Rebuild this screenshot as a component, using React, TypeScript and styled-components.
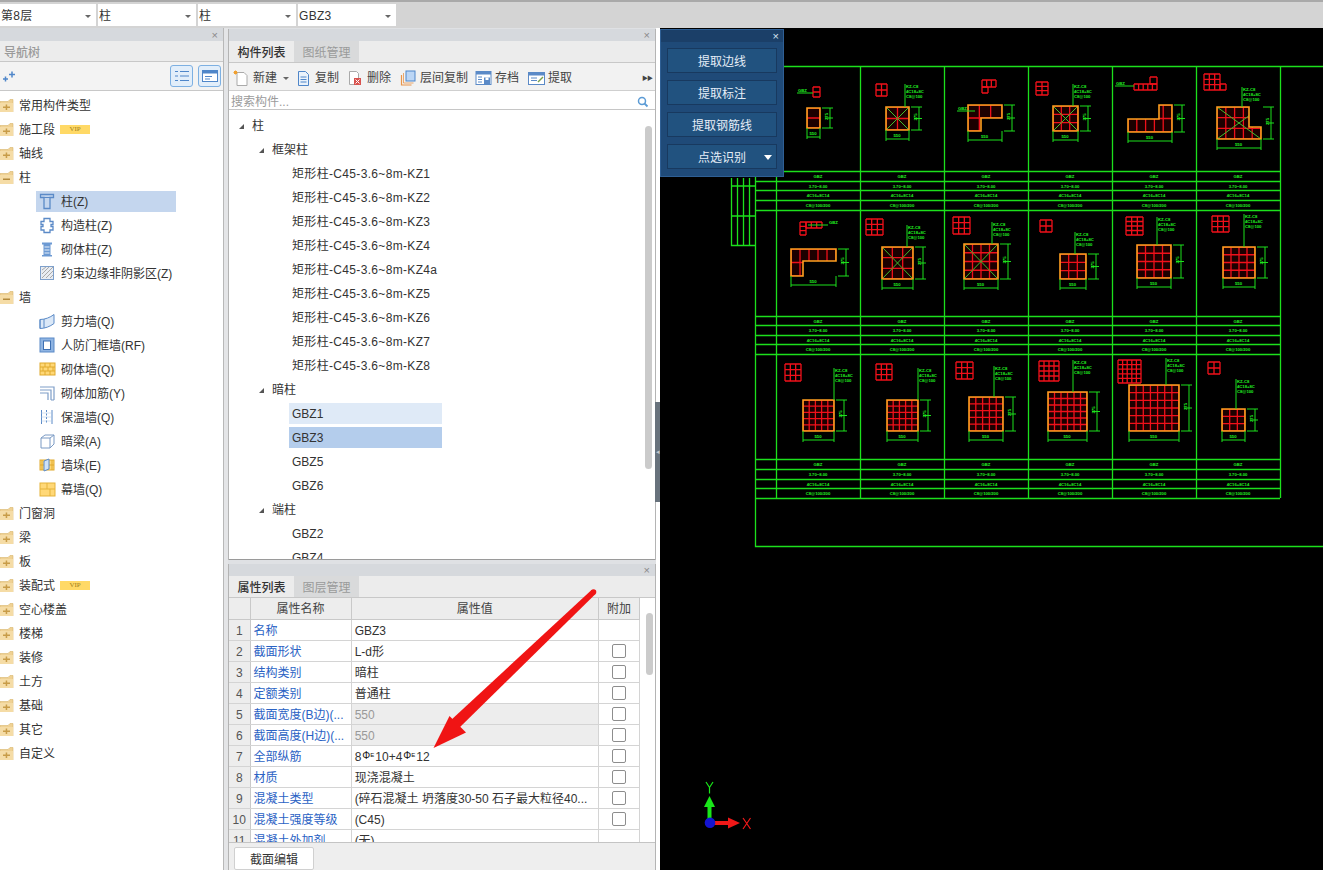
import React from "react";
import styled, { createGlobalStyle } from "styled-components";

const Global = createGlobalStyle`
  html, body { margin: 0; padding: 0; background: #000; }
  * { box-sizing: border-box; }
  #root { width: 1323px; height: 870px; overflow: hidden; }
`;

const LATIN = `"Liberation Sans", "Noto Sans CJK SC", sans-serif`;

const Page = styled.div`
  position: relative;
  width: 1323px;
  height: 870px;
  overflow: hidden;
  display: flex;
  flex-direction: column;
  background: #dfe1e4;
  font-family: ${LATIN};
  font-size: 12px;
  line-height: 16px;
  color: #333;
`;

/* top selects */
const TopBar = styled.div`
  height: 28px;
  flex: none;
  display: flex;
  gap: 2px;
  padding: 4px 0 2px 0;
  background: #d4d4d4;
  border-top: 2px solid #a9a9a9;
  align-items: stretch;
`;
const SelectBox = styled.div<{ $w: number }>`
  width: ${(p) => p.$w}px;
  background: #fff;
  display: flex;
  align-items: center;
  padding: 2px 5px 0 1px;
  font-size: 12px;
  color: #333;
  letter-spacing: 0.3px;
  justify-content: space-between;
  margin-top: -2px;
`;
const Caret = styled.span<{ $ml?: number }>`
  width: 0;
  height: 0;
  margin-left: ${(p) => p.$ml || 0}px;
  border-left: 3px solid transparent;
  border-right: 3px solid transparent;
  border-top: 3px solid #666;
`;

const Main = styled.div`
  flex: 1;
  display: flex;
  min-height: 0;
`;

/* left nav */
const Nav = styled.div`
  width: 224px;
  flex: none;
  display: flex;
  flex-direction: column;
  background: #fff;
  border-right: 1px solid #b8b8b8;
`;
const CloseStrip = styled.div<{ $h: number }>`
  height: ${(p) => p.$h}px;
  flex: none;
  background: #d6d9dd;
  display: flex;
  align-items: center;
  justify-content: flex-end;
  padding-right: 5px;
  color: #8a8a8a;
  font-size: 11px;
  line-height: 12px;
`;
const NavTitle = styled.div`
  height: 21px;
  flex: none;
  background: #ececec;
  border-bottom: 1px solid #c8c8c8;
  color: #9a9a9a;
  font-size: 12px;
  font-weight: 500;
  padding: 3px 0 0 4px;
  display: flex;
  align-items: center;
`;
const NavTools = styled.div`
  height: 29px;
  flex: none;
  background: #f3f3f3;
  border-bottom: 1px solid #c8c8c8;
  display: flex;
  align-items: center;
  padding: 0 2px 0 2px;
  gap: 5px;
`;
const Spacer = styled.div`
  flex: 1;
`;
const ToolToggle = styled.div`
  width: 23px;
  height: 22px;
  border: 1px solid #7db0e2;
  border-radius: 3px;
  background: #e2eefa;
  display: flex;
  align-items: center;
  justify-content: center;
`;
const NavTree = styled.div`
  flex: 1;
  padding-top: 2px;
  display: flex;
  flex-direction: column;
`;
const NavRow = styled.div<{ $child?: boolean }>`
  height: 24px;
  flex: none;
  display: flex;
  align-items: center;
  padding-left: ${(p) => (p.$child ? 36 : 0)}px;
  color: #333;
  font-size: 12px;
  white-space: nowrap;
`;
const FolderLabel = styled.span`
  margin-left: 5px;
  padding-top: 2px;
`;
const ChildLabel = styled.span`
  padding-top: 2px;
`;
const Vip = styled.span`
  margin-left: 5px;
  width: 30px;
  height: 9px;
  background: #ffd966;
  color: #a08020;
  font: 7px/9px "Liberation Serif", serif;
  text-align: center;
`;
const ChildInner = styled.div<{ $sel?: boolean }>`
  height: 21px;
  width: ${(p) => (p.$sel ? "140px" : "auto")};
  display: flex;
  align-items: center;
  gap: 6px;
  padding-left: 3px;
  background: ${(p) => (p.$sel ? "#c4d6ee" : "transparent")};
`;
const IconSlot = styled.span`
  width: 16px;
  height: 16px;
  flex: none;
  display: block;
`;

/* centre column */
const Gutter = styled.div`
  width: 4px;
  flex: none;
  background: #e4e5e7;
`;
const Column = styled.div`
  width: 428px;
  flex: none;
  display: flex;
  flex-direction: column;
  gap: 4px;
  padding-top: 1px;
`;
const Panel = styled.div<{ $h: number }>`
  height: ${(p) => p.$h}px;
  flex: none;
  display: flex;
  flex-direction: column;
  background: #fff;
  overflow: hidden;
  border-left: 1px solid #b4b4b4;
  border-right: 1px solid #b4b4b4;
`;
const Tabs = styled.div`
  height: 22px;
  flex: none;
  display: flex;
  background: #ececec;
  border-bottom: 1px solid #c8c8c8;
`;
const Tab = styled.div<{ $on?: boolean }>`
  width: 65px;
  display: flex;
  align-items: center;
  justify-content: center;
  padding-top: 2px;
  font-size: 12px;
  font-weight: ${(p) => (p.$on ? 500 : 400)};
  color: ${(p) => (p.$on ? "#333" : "#9a9a9a")};
  background: ${(p) => (p.$on ? "#ececec" : "#d9dadb")};
`;
const Toolbar = styled.div`
  height: 28px;
  flex: none;
  background: #f2f2f2;
  border-bottom: 1px solid #cfcfcf;
  display: flex;
  align-items: center;
  padding: 3px 0 0 4px;
  font-size: 12px;
  color: #444;
`;
const ToolItem = styled.div<{ $gap: number }>`
  display: flex;
  align-items: center;
  gap: 3px;
  margin-right: ${(p) => p.$gap}px;
  white-space: nowrap;
`;
const MoreArrows = styled.span`
  margin-left: auto;
  margin-right: 3px;
  font-size: 6px;
  color: #444;
  letter-spacing: -1px;
`;
const Search = styled.div`
  height: 19px;
  flex: none;
  background: #fff;
  border-bottom: 1px solid #c6c6c6;
  display: flex;
  align-items: center;
  justify-content: space-between;
  padding: 3px 6px 0 2px;
  color: #9b9b9b;
  font-size: 12px;
`;
const TreeArea = styled.div`
  position: relative;
  flex: 1;
  overflow: hidden;
  padding-top: 3px;
  border-bottom: 1px solid #9a9a9a;
`;
const TreeRow = styled.div<{ $lvl: number; $wide?: boolean }>`
  height: 24px;
  display: flex;
  align-items: center;
  padding: 2px 0 0 ${(p) => p.$lvl}px;
  font-size: 12px;
  color: #333;
  white-space: nowrap;
  letter-spacing: ${(p) => (p.$wide ? "0.33px" : "0")};
`;
const TreeTri = styled.span`
  width: 0;
  height: 0;
  margin-right: 8px;
  border-left: 5px solid transparent;
  border-bottom: 5px solid #555;
`;
const TreePill = styled.span<{ $bg?: string }>`
  width: 153px;
  height: 21px;
  margin: -2px 0 0 -3px;
  padding: 2px 0 0 3px;
  display: flex;
  align-items: center;
  background: ${(p) => p.$bg || "transparent"};
`;
const Scroll = styled.div<{ $top: number; $h: number; $r: number }>`
  position: absolute;
  right: ${(p) => p.$r}px;
  top: ${(p) => p.$top}px;
  width: 7px;
  height: ${(p) => p.$h}px;
  border-radius: 4px;
  background: #cbcbcb;
`;

/* property table */
const TableWrap = styled.div`
  position: relative;
  flex: 1;
  overflow: hidden;
  min-height: 0;
`;
const Grid = styled.table`
  border-collapse: collapse;
  table-layout: fixed;
  width: 411px;
  font-size: 12px;
`;
const HeadCell = styled.th`
  height: 21px;
  padding: 2px 0 0;
  font-weight: 400;
  background: #ededed;
  color: #444;
  border-right: 1px solid #c9c9c9;
  border-bottom: 1px solid #c9c9c9;
`;
const NumCell = styled.td`
  height: 21px;
  padding: 2px 0 0;
  text-align: center;
  background: #ededed;
  color: #555;
  border-right: 1px solid #c9c9c9;
  border-bottom: 1px solid #d4d4d4;
`;
const NameCell = styled.td`
  height: 21px;
  padding: 2px 0 0 3px;
  color: #2a62c4;
  white-space: nowrap;
  overflow: hidden;
  border-right: 1px solid #d4d4d4;
  border-bottom: 1px solid #d4d4d4;
`;
const ValCell = styled.td<{ $grey?: boolean }>`
  height: 21px;
  padding: 2px 0 0 3px;
  white-space: nowrap;
  overflow: hidden;
  color: ${(p) => (p.$grey ? "#999" : "#333")};
  background: ${(p) => (p.$grey ? "#ededed" : "#fff")};
  border-right: 1px solid #d4d4d4;
  border-bottom: 1px solid #d4d4d4;
`;
const CheckCell = styled.td`
  height: 21px;
  padding: 0;
  border-bottom: 1px solid #d4d4d4;
  border-right: 1px solid #d4d4d4;
  text-align: center;
`;
const Check = styled.span`
  display: block;
  width: 14px;
  height: 14px;
  margin: 0 auto;
  border: 1px solid #8d8d8d;
  border-radius: 2px;
  background: #fff;
`;
const Rebar = styled.span`
  display: inline-block;
  padding: 0 1px;
  font-size: 10px;
  line-height: 0;
  vertical-align: 2px;
  color: #111;
`;
const RebarE = styled.span`
  font-size: 6px;
  vertical-align: 2px;
`;
const Footer = styled.div`
  height: 28px;
  flex: none;
  background: #eeeeee;
  border-top: 1px solid #c4c4c4;
  padding: 4px 0 0 5px;
`;
const FootBtn = styled.div`
  width: 80px;
  height: 23px;
  background: #fff;
  border: 1px solid #d0d0d0;
  border-radius: 2px;
  padding-top: 2px;
  display: flex;
  align-items: center;
  justify-content: center;
  font-size: 12px;
`;

/* splitter + canvas */
const Split = styled.div`
  width: 4px;
  flex: none;
  background: #fff;
  display: flex;
  align-items: center;
  position: relative;
`;
const SplitHandle = styled.div`
  position: absolute;
  left: -1px;
  top: 374px;
  width: 5px;
  height: 100px;
  background: #68727c;
  display: flex;
  align-items: center;
  justify-content: center;
  color: #c4c8cc;
  font-size: 7px;
`;
const Canvas = styled.div`
  position: relative;
  flex: 1;
  background: #000;
  overflow: hidden;
`;
const CadSvg = styled.svg`
  display: block;
`;
const Float = styled.div`
  position: absolute;
  left: 0;
  top: 1px;
  width: 124px;
  height: 148px;
  background: #1f4a78;
  border: 1px solid #2f5f94;
  display: flex;
  flex-direction: column;
`;
const FloatHead = styled.div`
  height: 12px;
  flex: none;
  background: #1b3f68;
  color: #d6e3f0;
  font-size: 11px;
  line-height: 12px;
  text-align: right;
  padding-right: 4px;
`;
const FloatBody = styled.div`
  display: flex;
  flex-direction: column;
  gap: 7px;
  padding: 6px 6px 0 6px;
`;
const FloatBtn = styled.div`
  position: relative;
  height: 25px;
  background: #21527f;
  border: 1px solid #18395f;
  color: #e6eef7;
  font-size: 12px;
  padding-top: 2px;
  display: flex;
  align-items: center;
  justify-content: center;
`;
const FloatCaret = styled.span`
  position: absolute;
  right: 4px;
  top: 10px;
  border-left: 4px solid transparent;
  border-right: 4px solid transparent;
  border-top: 5px solid #fff;
`;
const ArrowOverlay = styled.svg`
  position: absolute;
  left: 0;
  top: 0;
  pointer-events: none;
`;

/* icons */
const Folder: React.FC<{ open?: boolean }> = ({ open }) => (
  <svg width="14" height="13" viewBox="0 0 14 13">
    <path d="M0 2.500h8l2 -2h3v12.500H0z" fill="#efd193" stroke="#d9b66c" strokeWidth="0.6" />
    <rect x="0" y="4" width="13" height="9" fill="#f5dca6" />
    <rect x="3" y="7.500" width="7" height="1.500" fill={open ? "#b38a3c" : "#c89c48"} />
    {!open && <rect x="5.700" y="5.500" width="1.500" height="5.500" fill="#c89c48" />}
  </svg>
);

const B = "#5b8ac7";
const childIcons: Record<string, React.ReactNode> = {
  col: (
    <>
      <path d="M1.500 1.500h13v3h-3.500v11h-6v-11h-3.500z" fill="none" stroke={B} strokeWidth="1.300" />
      <path d="M5 4.500h6" stroke={B} />
    </>
  ),
  gz: <path d="M5 1.500h6v3h3v3h-2v2h2v3.500h-3v2.500h-6v-2.500h-3v-3.500h2v-2h-2v-3h3z" fill="none" stroke={B} strokeWidth="1.300" />,
  qt: (
    <>
      <path d="M3 1.500h10v2h-1.500v10.500h1.500v1.500h-10v-1.500h1.500v-10.500h-1.500z" fill="#6d9ad3" />
      <path d="M5.500 6h5M5.500 9h5M5.500 12h5" stroke="#e8f0fa" />
    </>
  ),
  ys: (
    <>
      <rect x="1.500" y="1.500" width="13" height="13" fill="#e8ecf2" stroke="#7ea0cc" />
      <path d="M3 5l4-3M3 9l7-7M3 13l11-11M7 13l7-7M11 13l3-3" stroke="#a9a9a9" />
    </>
  ),
  jl: (
    <>
      <path d="M1 6.500c5 0 10-2 14-5v9c-4 3-9 5-14 5z" fill="#dbe8f7" stroke={B} />
      <path d="M1 6.500v9M5 6v9" stroke={B} />
    </>
  ),
  rf: (
    <>
      <rect x="1" y="1" width="14" height="14" fill="#8fb4e2" stroke={B} />
      <rect x="4.500" y="4" width="7" height="8.500" fill="#fff" stroke="#3e70b3" />
    </>
  ),
  qtq: (
    <>
      <rect x="1" y="2" width="15" height="12" fill="#ffd877" stroke="#e0aa2e" />
      <path d="M1 6h15M1 10h15M6 2v4M11 2v4M4 6v4M9 6v4M14 6v4M6 10v4M11 10v4" stroke="#e0aa2e" />
    </>
  ),
  jj: <path d="M1 2h14v13M1 5h11v10M1 8h8v7M15 2M12 15h3" fill="none" stroke="#7e9ec8" strokeWidth="1.200" />,
  bw: (
    <>
      <path d="M2.500 1v14M13 1v14" stroke={B} />
      <path d="M7.500 1v14" stroke={B} strokeDasharray="2 1.500" />
      <path d="M2.500 4h10M2.500 8h10M2.500 12h10" stroke="#a8c4e4" strokeDasharray="1 1" />
    </>
  ),
  al: (
    <>
      <path d="M2 5l4-3h9v9l-4 4H2z" fill="#fff" stroke="#7a9ac4" />
      <path d="M2 5h9v10M11 5l4-3" stroke="#7a9ac4" fill="none" />
    </>
  ),
  qd: (
    <>
      <rect x="1" y="3" width="14" height="10" fill="#ffd877" stroke="#e0aa2e" />
      <path d="M1 8h14M3 3v10M13 3v10" stroke="#e0aa2e" />
      <path d="M5 4l5-2v10l-5 2z" fill="#cfe2f6" stroke={B} />
    </>
  ),
  mq: (
    <>
      <rect x="1" y="2" width="15" height="13" fill="#ffd877" stroke="#e5b33a" />
      <path d="M1 8h15M8 2v6M11 8v7" stroke="#e5b33a" />
    </>
  ),
};
const ChildIcon: React.FC<{ k: string }> = ({ k }) => (
  <IconSlot>
    <svg width="17" height="17" viewBox="0 0 17 17">
      {childIcons[k]}
    </svg>
  </IconSlot>
);

type NavItem = { t: string; open?: boolean; vip?: boolean; c?: [string, string, boolean?][] };
const navData: NavItem[] = [
  { t: "常用构件类型" },
  { t: "施工段", vip: true },
  { t: "轴线" },
  {
    t: "柱",
    open: true,
    c: [
      ["col", "柱(Z)", true],
      ["gz", "构造柱(Z)"],
      ["qt", "砌体柱(Z)"],
      ["ys", "约束边缘非阴影区(Z)"],
    ],
  },
  {
    t: "墙",
    open: true,
    c: [
      ["jl", "剪力墙(Q)"],
      ["rf", "人防门框墙(RF)"],
      ["qtq", "砌体墙(Q)"],
      ["jj", "砌体加筋(Y)"],
      ["bw", "保温墙(Q)"],
      ["al", "暗梁(A)"],
      ["qd", "墙垛(E)"],
      ["mq", "幕墙(Q)"],
    ],
  },
  { t: "门窗洞" },
  { t: "梁" },
  { t: "板" },
  { t: "装配式", vip: true },
  { t: "空心楼盖" },
  { t: "楼梯" },
  { t: "装修" },
  { t: "土方" },
  { t: "基础" },
  { t: "其它" },
  { t: "自定义" },
];

const kz = ["KZ1", "KZ2", "KZ3", "KZ4", "KZ4a", "KZ5", "KZ6", "KZ7", "KZ8"];

const RebarMark: React.FC = () => (
  <Rebar>
    Φ<RebarE>E</RebarE>
  </Rebar>
);

const props: { n: string; name: string; val: React.ReactNode; grey?: boolean; noCheck?: boolean }[] = [
  { n: "1", name: "名称", val: "GBZ3", noCheck: true },
  { n: "2", name: "截面形状", val: "L-d形" },
  { n: "3", name: "结构类别", val: "暗柱" },
  { n: "4", name: "定额类别", val: "普通柱" },
  { n: "5", name: "截面宽度(B边)(...", val: "550", grey: true },
  { n: "6", name: "截面高度(H边)(...", val: "550", grey: true },
  {
    n: "7",
    name: "全部纵筋",
    val: (
      <>
        8
        <RebarMark />
        10+4
        <RebarMark />
        12
      </>
    ),
  },
  { n: "8", name: "材质", val: "现浇混凝土" },
  { n: "9", name: "混凝土类型", val: "(碎石混凝土 坍落度30-50 石子最大粒径40..." },
  { n: "10", name: "混凝土强度等级", val: "(C45)" },
  { n: "11", name: "混凝土外加剂", val: "(无)", noCheck: true },
];

/* CAD drawing: coordinates are the drawing's own, offset by the canvas origin */
const OX = 660;
const OY = 28;
const G = "#1ce01c";
const colsX = [776, 860, 944, 1028, 1112, 1196, 1280];
const rowY = [
  [171, 181, 190, 200, 210],
  [316, 325, 335, 344, 354],
  [459, 469, 479, 488, 498],
];

type R4 = [number, number, number, number];
type Sec = {
  p: string;
  x: number;
  y: number;
  w: number;
  h: number;
  nx: number;
  ny: number;
  cross?: boolean;
  thumb: R4[];
  tag: [number, number];
  side?: [number, number];
};
const rect = (x: number, y: number, w: number, h: number) => `M${x} ${y}h${w}v${h}h${-w}z`;
const secs: Sec[] = [
  { p: rect(807, 108, 13, 20), x: 807, y: 108, w: 13, h: 20, nx: 1, ny: 2, thumb: [[813, 87, 7, 10]], tag: [797, 93], side: [813, 93] },
  { p: rect(886, 107, 23, 23), x: 886, y: 107, w: 23, h: 23, nx: 2, ny: 2, cross: true, thumb: [[876, 84, 11, 12]], tag: [905, 92] },
  { p: "M968 105h34v13h-21v13h-13z", x: 968, y: 105, w: 34, h: 26, nx: 3, ny: 2, thumb: [[982, 80, 14, 7], [982, 87, 6, 6]], tag: [957, 110], side: [975, 111] },
  { p: rect(1053, 106, 25, 25), x: 1053, y: 106, w: 25, h: 25, nx: 3, ny: 3, cross: true, thumb: [[1036, 82, 12, 13]], tag: [1073, 92] },
  { p: "M1159 105h13v27h-44v-13h31z", x: 1128, y: 105, w: 44, h: 27, nx: 5, ny: 2, thumb: [[1134, 84, 23, 6], [1150, 77, 7, 7]], tag: [1115, 84], side: [1134, 86] },
  { p: "M1217 107h32v20h12v12h-44z", x: 1217, y: 107, w: 44, h: 32, nx: 5, ny: 3, cross: true, thumb: [[1204, 74, 16, 16], [1220, 84, 6, 6]], tag: [1242, 95] },
  { p: "M791 249h45v12h-33v15h-12z", x: 791, y: 249, w: 45, h: 27, nx: 5, ny: 2, thumb: [[800, 222, 6, 13], [806, 222, 16, 6]], tag: [828, 223], side: [808, 225] },
  { p: rect(882, 247, 31, 32), x: 882, y: 247, w: 31, h: 32, nx: 3, ny: 3, cross: true, thumb: [[866, 219, 17, 16]], tag: [907, 233] },
  { p: rect(964, 244, 34, 35), x: 964, y: 244, w: 34, h: 35, nx: 4, ny: 4, cross: true, thumb: [[953, 217, 17, 17]], tag: [992, 230] },
  { p: rect(1060, 254, 26, 25), x: 1060, y: 254, w: 26, h: 25, nx: 3, ny: 3, thumb: [[1040, 220, 12, 12]], tag: [1075, 240] },
  { p: rect(1137, 245, 34, 33), x: 1137, y: 245, w: 34, h: 33, nx: 4, ny: 4, thumb: [[1126, 217, 17, 18]], tag: [1157, 225] },
  { p: rect(1223, 247, 32, 31), x: 1223, y: 247, w: 32, h: 31, nx: 4, ny: 4, thumb: [[1212, 216, 17, 16]], tag: [1244, 222] },
  { p: rect(803, 400, 31, 31), x: 803, y: 400, w: 31, h: 31, nx: 5, ny: 5, thumb: [[785, 364, 16, 17]], tag: [834, 376] },
  { p: rect(887, 400, 31, 31), x: 887, y: 400, w: 31, h: 31, nx: 5, ny: 5, thumb: [[876, 364, 16, 16]], tag: [918, 376] },
  { p: rect(969, 397, 34, 34), x: 969, y: 397, w: 34, h: 34, nx: 5, ny: 5, thumb: [[956, 362, 17, 17]], tag: [994, 374] },
  { p: rect(1048, 392, 39, 39), x: 1048, y: 392, w: 39, h: 39, nx: 6, ny: 6, thumb: [[1039, 361, 20, 20]], tag: [1073, 368] },
  { p: rect(1129, 385, 50, 46), x: 1129, y: 385, w: 50, h: 46, nx: 7, ny: 6, thumb: [[1118, 360, 23, 23]], tag: [1166, 366] },
  { p: rect(1222, 409, 23, 22), x: 1222, y: 409, w: 23, h: 22, nx: 3, ny: 3, thumb: [[1208, 362, 12, 12]], tag: [1236, 387] },
];

const CadLabel = styled.text`
  fill: #22f022;
  font-family: "Liberation Sans", sans-serif;
  font-size: 4.2px;
  font-weight: 700;
`;

const gridPath = (x: number, y: number, w: number, h: number, nx: number, ny: number) => {
  let d = "";
  for (let i = 0; i <= nx; i++) d += `M${x + (w * i) / nx} ${y}v${h}`;
  for (let j = 0; j <= ny; j++) d += `M${x} ${y + (h * j) / ny}h${w}`;
  return d;
};

const Section: React.FC<{ s: Sec; clipId: string }> = ({ s, clipId }) => {
  const bx = s.x + s.w;
  const by = s.y + s.h;
  return (
    <g>
      {s.thumb.map(([tx, ty, tw, th], i) => (
        <path
          key={i}
          d={gridPath(tx, ty, tw, th, Math.max(1, Math.round(tw / 5)), Math.max(1, Math.round(th / 5)))}
          stroke="#f0101a"
          fill="none"
          strokeWidth="1.300"
        />
      ))}
      <clipPath id={clipId}>
        <path d={s.p} />
      </clipPath>
      <path d={s.p} fill="#1c0000" />
      <path d={gridPath(s.x, s.y, s.w, s.h, s.nx, s.ny)} clipPath={`url(#${clipId})`} stroke="#f0101a" fill="none" strokeWidth="1.300" />
      {s.cross && (
        <path d={`M${s.x} ${s.y}L${bx} ${by}M${bx} ${s.y}L${s.x} ${by}`} clipPath={`url(#${clipId})`} stroke="#3fbf2f" strokeWidth="1" />
      )}
      <path d={s.p} fill="none" stroke="#ffa020" strokeWidth="1.600" />
      <path
        d={`M${s.x} ${by}v11M${bx} ${by}v11M${s.x} ${by + 9}h${s.w}M${bx + 2} ${s.y}h11M${bx + 2} ${by}h11M${bx + 10} ${s.y}v${s.h}M${bx + 5} ${s.y + s.h / 2}h8`}
        stroke={G}
        strokeWidth="1"
        fill="none"
      />
      {s.side ? (
        <>
          <path d={`M${s.tag[0]} ${s.side[1]}H${s.side[0]}`} stroke={G} strokeWidth="1" />
          <CadLabel x={s.tag[0] + 1} y={s.side[1] - 1}>GBZ</CadLabel>
        </>
      ) : (
        <>
          <path d={`M${s.tag[0]} ${s.tag[1] - 8}V${s.y}`} stroke={G} strokeWidth="1" />
          <CadLabel x={s.tag[0] + 1} y={s.tag[1] - 4}>KZ-C8</CadLabel>
          <CadLabel x={s.tag[0] + 1} y={s.tag[1] + 1}>4C18+8C</CadLabel>
          <CadLabel x={s.tag[0] + 1} y={s.tag[1] + 6}>C8@100</CadLabel>
        </>
      )}
      <CadLabel x={s.x + s.w / 2 - 4} y={by + 7}>550</CadLabel>
      <CadLabel x={bx + 8} y={s.y + s.h / 2 + 2} transform={`rotate(-90 ${bx + 8} ${s.y + s.h / 2 + 2})`}>
        275
      </CadLabel>
    </g>
  );
};

const CadDrawing: React.FC = () => (
  <CadSvg width={663} height={842} viewBox={`${OX} ${OY} 663 842`}>
    <g stroke={G} strokeWidth="1.300" fill="none" shapeRendering="auto">
      <path d="M755 66.500H1323M755.500 66V546.500H1323" />
      {colsX.map((x) => (
        <path key={x} d={`M${x + 0.5} 66V498`} />
      ))}
      {rowY.flat().map((y) => (
        <path key={y} d={`M755 ${y + 0.5}H1280`} />
      ))}
      <path d="M731.500 178V245.500H755M737.500 178V245M743.500 178V245M749.500 178V245M731 186H755M731 216H755" />
    </g>
    {rowY.map((ys, r) =>
      colsX.slice(0, 6).map((x) => (
        <g key={`${r}-${x}`} textAnchor="middle">
          <CadLabel x={x + 42} y={ys[0] + 7}>GBZ</CadLabel>
          <CadLabel x={x + 42} y={ys[1] + 7}>3.70~8.00</CadLabel>
          <CadLabel x={x + 42} y={ys[2] + 7}>4C16+8C14</CadLabel>
          <CadLabel x={x + 42} y={ys[3] + 7}>C8@100/200</CadLabel>
        </g>
      ))
    )}
    <g>
      {secs.map((s, i) => (
        <Section key={i} s={s} clipId={`c${i}`} />
      ))}
    </g>
    <g>
      <path d="M709.500 820V805" stroke="#19e619" strokeWidth="4" />
      <path d="M709.500 796l5.500 11h-11z" fill="#19e619" />
      <path d="M714 823h15" stroke="#f01818" strokeWidth="4" />
      <path d="M740 823l-12 -5.500v11z" fill="#f01818" />
      <circle cx="710" cy="822.700" r="5.300" fill="#1414d0" />
      <path d="M706 782l3.500 5.500 3.500 -5.500M709.500 787.500v6" stroke="#19e619" strokeWidth="1.200" fill="none" />
      <path d="M743 818l7.500 11M750.500 818l-7.500 11" stroke="#f01818" strokeWidth="1.200" />
    </g>
  </CadSvg>
);

const Plus: React.FC = () => (
  <svg width="16" height="12" viewBox="0 0 16 12">
    <path d="M1 9h5M3.500 6.500v5" stroke="#4f86c9" strokeWidth="1.500" />
    <path d="M7 4.500h6M10 1.500v6" stroke="#4f86c9" strokeWidth="1.500" />
  </svg>
);

const tool = (k: string) => {
  switch (k) {
    case "new":
      return (
        <>
          <path d="M4 2.500h7l3 3v10H4z" fill="#fff" stroke="#aaa" />
          <path d="M1 1l3 3M4 1L1 4M2.500 .5v4M.5 2.500h4" stroke="#f0a030" strokeWidth="1" />
        </>
      );
    case "copy":
      return (
        <>
          <path d="M3.500 1.500h7l3 3v11h-10z" fill="#eaf2fb" stroke="#4f86c9" />
          <path d="M5.500 7h6M5.500 9.500h6M5.500 12h6" stroke="#4f86c9" />
        </>
      );
    case "del":
      return (
        <>
          <path d="M2.500 1.500h7l2 2v11h-9z" fill="#fff" stroke="#aaa" />
          <rect x="7" y="8" width="7" height="7" fill="#d9534f" />
          <path d="M8.500 9.500l4 4M12.500 9.500l-4 4" stroke="#fff" />
        </>
      );
    case "layer":
      return (
        <>
          <path d="M1.500 5v10h10" fill="none" stroke="#e8944a" strokeWidth="1.200" />
          <path d="M3.500 3v10h10" fill="none" stroke="#e8944a" strokeWidth="0.800" />
          <rect x="6" y="1" width="9" height="10" fill="#bcd6f5" stroke="#4f86c9" />
        </>
      );
    case "save":
      return (
        <>
          <rect x="1" y="1.500" width="15" height="13" fill="#fff" stroke="#5b8ac7" />
          <rect x="1" y="1.500" width="15" height="3" fill="#5b8ac7" />
          <path d="M3 7h4M3 9.500h4M3 12h4" stroke="#5b8ac7" />
          <rect x="9" y="7.500" width="6" height="7" fill="#5b8ac7" />
          <rect x="10.500" y="7.500" width="3" height="2.500" fill="#fff" />
        </>
      );
    default:
      return (
        <>
          <rect x="0.500" y="2.500" width="16" height="12" fill="#fff" stroke="#5b8ac7" />
          <rect x="0.500" y="2.500" width="16" height="3" fill="#5b8ac7" />
          <path d="M3 8h6M3 10.500h6" stroke="#5b8ac7" />
          <path d="M10 12l5 -5" stroke="#7aa04a" strokeWidth="1.500" />
        </>
      );
  }
};
const ToolIcon: React.FC<{ k: string }> = ({ k }) => (
  <svg width="17" height="17" viewBox="0 0 17 17">
    {tool(k)}
  </svg>
);

const App: React.FC = () => (
  <Page>
    <Global />
    <TopBar>
      {["第8层", "柱", "柱", "GBZ3"].map((t, i) => (
        <SelectBox key={i} $w={i === 0 ? 96 : 98}>
          {t}
          <Caret />
        </SelectBox>
      ))}
    </TopBar>
    <Main>
      <Nav>
        <CloseStrip $h={13}>×</CloseStrip>
        <NavTitle>导航树</NavTitle>
        <NavTools>
          <Plus />
          <Spacer />
          <ToolToggle>
            <svg width="14" height="12" viewBox="0 0 14 12">
              <path d="M0 1.500h3M0 6h3M0 10.500h3M5 1.500h9M5 6h9M5 10.500h9" stroke="#4f86c9" />
            </svg>
          </ToolToggle>
          <ToolToggle>
            <svg width="16" height="12" viewBox="0 0 16 12">
              <rect x="0.500" y="0.500" width="15" height="11" fill="#fff" stroke="#4f86c9" />
              <rect x="0.500" y="0.500" width="15" height="3" fill="#4f86c9" />
              <path d="M3 6.500h7M3 9h5" stroke="#4f86c9" />
            </svg>
          </ToolToggle>
        </NavTools>
        <NavTree>
          {navData.map((g) => (
            <React.Fragment key={g.t}>
              <NavRow>
                <Folder open={g.open} />
                <FolderLabel>{g.t}</FolderLabel>
                {g.vip && <Vip>VIP</Vip>}
              </NavRow>
              {g.c?.map(([k, t, sel]) => (
                <NavRow $child key={t}>
                  <ChildInner $sel={sel}>
                    <ChildIcon k={k} />
                    <ChildLabel>{t}</ChildLabel>
                  </ChildInner>
                </NavRow>
              ))}
            </React.Fragment>
          ))}
        </NavTree>
      </Nav>
      <Gutter />
      <Column>
        <Panel $h={531}>
          <CloseStrip $h={12}>×</CloseStrip>
          <Tabs>
            <Tab $on>构件列表</Tab>
            <Tab>图纸管理</Tab>
          </Tabs>
          <Toolbar>
            <ToolItem $gap={6}>
              <ToolIcon k="new" />
              新建
              <Caret $ml={3} />
            </ToolItem>
            <ToolItem $gap={8}>
              <ToolIcon k="copy" />
              复制
            </ToolItem>
            <ToolItem $gap={9}>
              <ToolIcon k="del" />
              删除
            </ToolItem>
            <ToolItem $gap={7}>
              <ToolIcon k="layer" />
              层间复制
            </ToolItem>
            <ToolItem $gap={9}>
              <ToolIcon k="save" />
              存档
            </ToolItem>
            <ToolItem $gap={0}>
              <ToolIcon k="pick" />
              提取
            </ToolItem>
            <MoreArrows>▶▶</MoreArrows>
          </Toolbar>
          <Search>
            搜索构件...
            <svg width="12" height="12" viewBox="0 0 12 12">
              <circle cx="5" cy="5" r="3.500" fill="none" stroke="#5b9bd5" strokeWidth="1.500" />
              <path d="M7.500 7.500l3 3" stroke="#5b9bd5" strokeWidth="1.800" />
            </svg>
          </Search>
          <TreeArea>
            <TreeRow $lvl={10}>
              <TreeTri />柱
            </TreeRow>
            <TreeRow $lvl={30}>
              <TreeTri />框架柱
            </TreeRow>
            {kz.map((k) => (
              <TreeRow $lvl={63} $wide key={k}>
                矩形柱-C45-3.6~8m-{k}
              </TreeRow>
            ))}
            <TreeRow $lvl={30}>
              <TreeTri />暗柱
            </TreeRow>
            {["GBZ1", "GBZ3", "GBZ5", "GBZ6"].map((k, i) => (
              <TreeRow $lvl={63} key={k}>
                <TreePill $bg={i === 0 ? "#dfeaf7" : i === 1 ? "#b4cdec" : undefined}>{k}</TreePill>
              </TreeRow>
            ))}
            <TreeRow $lvl={30}>
              <TreeTri />端柱
            </TreeRow>
            {["GBZ2", "GBZ4"].map((k) => (
              <TreeRow $lvl={63} key={k}>
                {k}
              </TreeRow>
            ))}
            <Scroll $top={16} $h={343} $r={3} />
          </TreeArea>
        </Panel>
        <Panel $h={306}>
          <CloseStrip $h={12}>×</CloseStrip>
          <Tabs>
            <Tab $on>属性列表</Tab>
            <Tab>图层管理</Tab>
          </Tabs>
          <TableWrap>
            <Grid>
              <colgroup>
                <col style={{ width: 21 }} />
                <col style={{ width: 101 }} />
                <col style={{ width: 247 }} />
                <col style={{ width: 41 }} />
              </colgroup>
              <thead>
                <tr>
                  <HeadCell />
                  <HeadCell>属性名称</HeadCell>
                  <HeadCell>属性值</HeadCell>
                  <HeadCell>附加</HeadCell>
                </tr>
              </thead>
              <tbody>
                {props.map((p) => (
                  <tr key={p.n}>
                    <NumCell>{p.n}</NumCell>
                    <NameCell>{p.name}</NameCell>
                    <ValCell $grey={p.grey}>{p.val}</ValCell>
                    <CheckCell>{!p.noCheck && <Check />}</CheckCell>
                  </tr>
                ))}
              </tbody>
            </Grid>
            <Scroll $top={15} $h={62} $r={2} />
          </TableWrap>
          <Footer>
            <FootBtn>截面编辑</FootBtn>
          </Footer>
        </Panel>
      </Column>
      <Split>
        <SplitHandle>◂</SplitHandle>
      </Split>
      <Canvas>
        <CadDrawing />
        <Float>
          <FloatHead>×</FloatHead>
          <FloatBody>
            <FloatBtn>提取边线</FloatBtn>
            <FloatBtn>提取标注</FloatBtn>
            <FloatBtn>提取钢筋线</FloatBtn>
            <FloatBtn>
              点选识别
              <FloatCaret />
            </FloatBtn>
          </FloatBody>
        </Float>
      </Canvas>
    </Main>
    <ArrowOverlay width="1323" height="870" viewBox="0 0 1323 870">
      <path d="M591.500 590L595.500 594L458 729L450 721z" fill="#f01414" />
      <circle cx="593.500" cy="592" r="2.800" fill="#f01414" />
      <path d="M433.500 748L449.500 716L466 732.500z" fill="#f01414" />
    </ArrowOverlay>
  </Page>
);

export default App;
